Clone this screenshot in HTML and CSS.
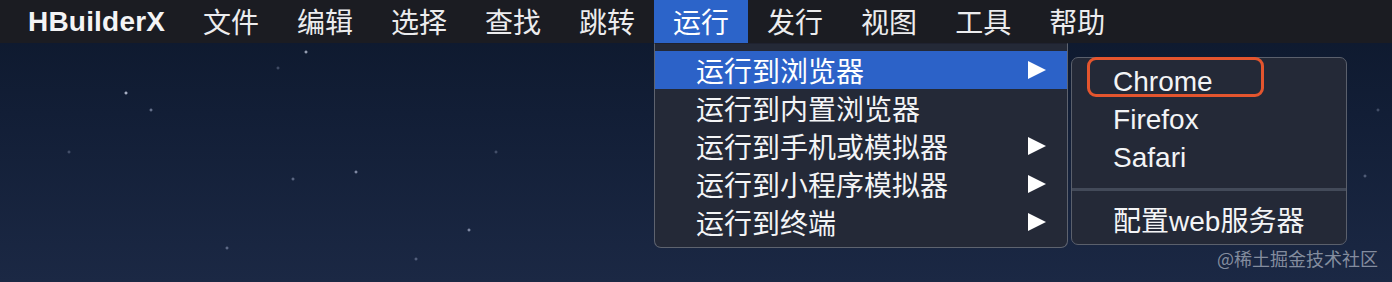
FILE: index.html
```html
<!DOCTYPE html>
<html lang="zh-CN">
<head>
<meta charset="utf-8">
<title>HBuilderX 运行菜单</title>
<link rel="stylesheet" href="styles.css">
</head>
<body>
<div class="screen">
  <header class="menubar">
    <span class="app">HBuilderX</span>
    <span class="item">文件</span>
    <span class="item">编辑</span>
    <span class="item">选择</span>
    <span class="item">查找</span>
    <span class="item">跳转</span>
    <span class="item active">运行
      <div class="dropdown">
        <div class="row hl"><span>运行到浏览器</span><i class="arrow"></i>
          <div class="submenu">
            <div class="row sub"><span>Chrome</span><b class="mark"></b></div>
            <div class="row sub"><span>Firefox</span></div>
            <div class="row sub"><span>Safari</span></div>
            <div class="sep"></div>
            <div class="row sub"><span>配置web服务器</span></div>
          </div>
        </div>
        <div class="row"><span>运行到内置浏览器</span></div>
        <div class="row"><span>运行到手机或模拟器</span><i class="arrow"></i></div>
        <div class="row"><span>运行到小程序模拟器</span><i class="arrow"></i></div>
        <div class="row"><span>运行到终端</span><i class="arrow"></i></div>
      </div>
    </span>
    <span class="item">发行</span>
    <span class="item">视图</span>
    <span class="item">工具</span>
    <span class="item">帮助</span>
  </header>
  <div class="watermark">@稀土掘金技术社区</div>
</div>
</body>
</html>
```
FILE: styles.css
```css
html, body {
  margin: 0;
  padding: 0;
  background: #111c33;
}

.screen {
  position: relative;
  width: 1392px;
  height: 282px;
  overflow: hidden;
  font-family: "Liberation Sans", "Noto Sans CJK SC", sans-serif;
  color: #f3f4f6;
  background:
    radial-gradient(circle at 306px 52px, rgba(230,236,255,0.9) 0, rgba(230,236,255,0.5) 1px, transparent 2px),
    radial-gradient(circle at 126px 93px, rgba(230,236,255,0.95) 0, rgba(230,236,255,0.6) 1px, transparent 2px),
    radial-gradient(circle at 151px 110px, rgba(200,210,240,0.7) 0, transparent 2px),
    radial-gradient(circle at 356px 172px, rgba(220,228,255,0.85) 0, rgba(220,228,255,0.4) 1px, transparent 2px),
    radial-gradient(circle at 293px 179px, rgba(200,210,240,0.6) 0, transparent 2px),
    radial-gradient(circle at 469px 230px, rgba(220,228,255,0.8) 0, rgba(220,228,255,0.4) 1px, transparent 2px),
    radial-gradient(circle at 227px 248px, rgba(200,210,240,0.6) 0, transparent 2px),
    radial-gradient(circle at 416px 259px, rgba(200,210,240,0.5) 0, transparent 2px),
    radial-gradient(circle at 278px 68px, rgba(200,210,240,0.4) 0, transparent 2px),
    radial-gradient(circle at 69px 152px, rgba(200,210,240,0.4) 0, transparent 2px),
    radial-gradient(circle at 496px 152px, rgba(200,210,240,0.4) 0, transparent 2px),
    radial-gradient(circle at 1365px 176px, rgba(200,210,240,0.5) 0, transparent 2px),
    radial-gradient(circle at 1378px 110px, rgba(200,210,240,0.4) 0, transparent 2px),
    linear-gradient(180deg, #0d182c 0%, #121e36 40%, #1b2844 100%);
}

.menubar {
  display: flex;
  align-items: stretch;
  height: 43px;
  padding-left: 9px;
  background: #1b1c22;
  font-size: 28px;
  line-height: 43px;
  color: #ececee;
}

.app {
  width: 136px;
  padding: 0 20px 0 19px;
  font-weight: bold;
  letter-spacing: 0.2px;
  white-space: nowrap;
  color: #f4f4f5;
}

.item {
  position: relative;
  padding: 0 19px;
  font-family: "Noto Sans CJK SC", sans-serif;
  font-size: 28px;
}

.item.active {
  background: #2c64c9;
  color: #ffffff;
}

.dropdown {
  position: absolute;
  left: 0;
  top: 43px;
  width: 412px;
  padding: 7px 0 6px;
  background: #242937;
  border: 1px solid #5e636f;
  border-top-color: #1f2230;
  border-radius: 0 0 7px 7px;
  line-height: 38px;
  z-index: 2;
}

.row {
  position: relative;
  display: flex;
  align-items: center;
  height: 38px;
  padding: 0 21px 0 41px;
  font-size: 28px;
  color: #f3f4f6;
}

.row span {
  flex: 1;
  font-family: "Noto Sans CJK SC", sans-serif;
}

.row.hl {
  background: #2c62c8;
  color: #ffffff;
}

.arrow {
  width: 0;
  height: 0;
  border-left: 18px solid #ffffff;
  border-top: 9px solid transparent;
  border-bottom: 9px solid transparent;
}

.submenu {
  position: absolute;
  left: 416px;
  top: 6px;
  width: 274px;
  padding: 5px 0 3px;
  background: #242937;
  border: 1px solid #5b606c;
  border-radius: 7px;
}

.row.sub {
  padding-left: 41px;
}

.row.sub span {
  font-family: "Liberation Sans", "Noto Sans CJK SC", sans-serif;
}

.mark {
  position: absolute;
  left: 15px;
  top: -6px;
  width: 171px;
  height: 34px;
  border: 3.5px solid #e4552e;
  border-radius: 9px;
}

.sep {
  height: 3px;
  margin: 11px 0 12px;
  background: #434a59;
}

.watermark {
  position: absolute;
  right: 14px;
  top: 246px;
  font-family: "Noto Sans CJK SC", sans-serif;
  font-size: 18px;
  line-height: 24px;
  color: rgba(205, 211, 222, 0.6);
}
```
